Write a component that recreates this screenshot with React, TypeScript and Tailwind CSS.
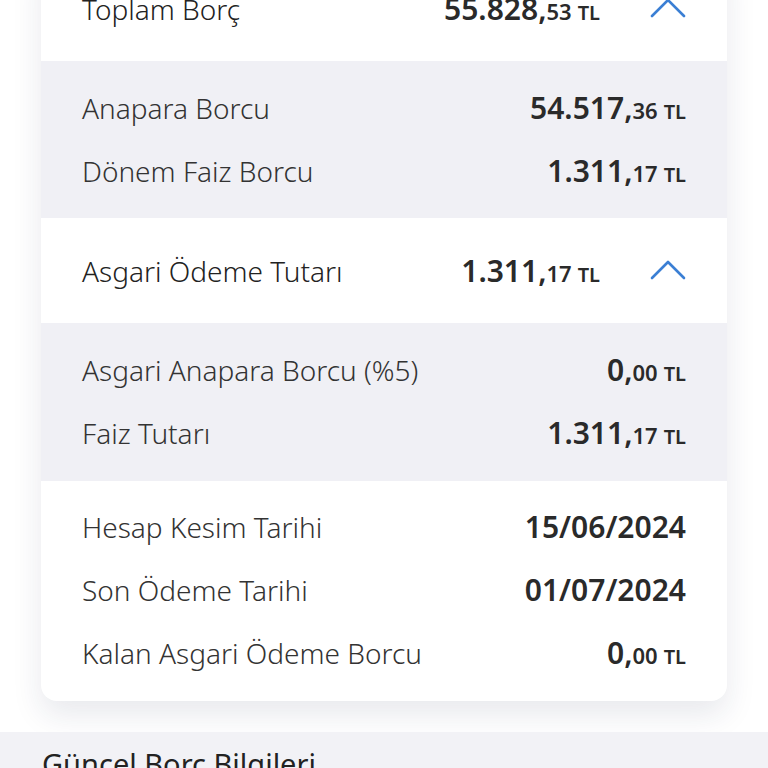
import React from "react";

const font = { fontFamily: '"Noto Sans", "Open Sans", sans-serif' };

function Chevron() {
    return (
        <svg width="36" height="20" viewBox="0 0 36 20" fill="none">
            <path d="M2 18 L18 2 L34 18" stroke="#3b7fd4" strokeWidth="2.6" strokeLinecap="round" strokeLinejoin="round" />
        </svg>
    );
}

function Amount({ whole, dec }: { whole: string; dec: string }) {
    return (
        <span className="font-semibold text-[#2a2a2a] whitespace-nowrap leading-none">
            <span className="text-[30px]">{whole},</span>
            <span className="text-[22px]">{dec}</span>
            <span className="text-[20px] ml-[6px]">TL</span>
        </span>
    );
}

function Row({ label, children }: { label: string; children: React.ReactNode }) {
    return (
        <div className="flex items-center justify-between h-[63px]">
            <span className="text-[28px] font-light text-[#333]">{label}</span>
            {children}
        </div>
    );
}

function Header({ label, whole, dec }: { label: string; whole: string; dec: string }) {
    return (
        <div className="flex items-center h-[105px] bg-white px-[41px]">
            <span className="text-[28px] font-light text-[#222] flex-1">{label}</span>
            <Amount whole={whole} dec={dec} />
            <span className="ml-[50px] mt-[-2px]">
                <Chevron />
            </span>
        </div>
    );
}

export default function App() {
    return (
        <div className="w-[768px] h-[768px] overflow-hidden bg-white" style={font}>
            <div className="px-[41px] mt-[-44px]">
                <div className="rounded-[16px] bg-white overflow-hidden shadow-[0_14px_30px_rgba(30,40,80,0.10)]">
                    <Header label="Toplam Borç" whole="55.828" dec="53" />
                    <div className="bg-[#f0f0f5] px-[41px] pt-[15px] pb-[16px]">
                        <Row label="Anapara Borcu">
                            <Amount whole="54.517" dec="36" />
                        </Row>
                        <Row label="Dönem Faiz Borcu">
                            <Amount whole="1.311" dec="17" />
                        </Row>
                    </div>
                    <Header label="Asgari Ödeme Tutarı" whole="1.311" dec="17" />
                    <div className="bg-[#f0f0f5] px-[41px] pt-[15px] pb-[17px]">
                        <Row label="Asgari Anapara Borcu (%5)">
                            <Amount whole="0" dec="00" />
                        </Row>
                        <Row label="Faiz Tutarı">
                            <Amount whole="1.311" dec="17" />
                        </Row>
                    </div>
                    <div className="px-[41px] pt-[14px] pb-[17px]">
                        <Row label="Hesap Kesim Tarihi">
                            <span className="text-[30px] font-semibold text-[#2a2a2a] leading-none">15/06/2024</span>
                        </Row>
                        <Row label="Son Ödeme Tarihi">
                            <span className="text-[30px] font-semibold text-[#2a2a2a] leading-none">01/07/2024</span>
                        </Row>
                        <Row label="Kalan Asgari Ödeme Borcu">
                            <Amount whole="0" dec="00" />
                        </Row>
                    </div>
                </div>
            </div>
            <div className="mt-[31px] bg-[#f2f2f6] h-[60px] px-[42px] pt-[10px]">
                <span className="text-[29px] text-[#222]">Güncel Borç Bilgileri</span>
            </div>
        </div>
    );
}
